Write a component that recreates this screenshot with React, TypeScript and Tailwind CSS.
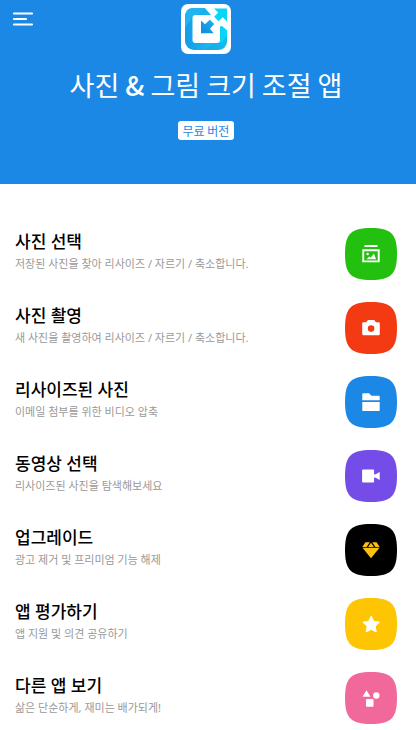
import type { ReactNode } from "react";

type MenuItem = {
  title: string;
  text: string;
  color: string;
  icon: ReactNode;
};

const items: MenuItem[] = [
  {
    title: "사진 선택",
    text: "저장된 사진을 찾아 리사이즈 / 자르기 / 축소합니다.",
    color: "text-[#23c00f]",
    icon: (
      <>
        <path d="M19.5 17h13v2h-13z" />
        <path
          fillRule="evenodd"
          d="M17.3 21.3h17.4v13H17.3zM19.2 23.2v9.2h13.6v-9.2z"
        />
        <circle cx="22.6" cy="26" r="1.2" />
        <path d="M21.6 31.2l2.6-2.6 1.5 1.2 3.2-4.2 2.2 5.6z" />
      </>
    ),
  },
  {
    title: "사진 촬영",
    text: "새 사진을 촬영하여 리사이즈 / 자르기 / 축소합니다.",
    color: "text-[#f33a12]",
    icon: (
      <path
        fillRule="evenodd"
        d="M23 18h6.2l1.8 2.3h2.5q1.3 0 1.3 1.3v10.1q0 1.5-1.3 1.5h-15q-1.3 0-1.3-1.5V21.6q0-1.3 1.3-1.3h2.7zM26.1 23.3a3.3 3.3 0 1 0 0 6.6 3.3 3.3 0 0 0 0-6.6z"
      />
    ),
  },
  {
    title: "리사이즈된 사진",
    text: "이메일 첨부를 위한 비디오 압축",
    color: "text-[#1c88e5]",
    icon: (
      <>
        <path d="M17.3 18.2q0-.9.9-.9H24l2.5 2.5h7.3q.9 0 .9.9v3.5H17.3z" />
        <path d="M17.3 26h17.4v8.2q0 .9-.9.9H18.2q-.9 0-.9-.9z" />
      </>
    ),
  },
  {
    title: "동영상 선택",
    text: "리사이즈된 사진을 탐색해보세요",
    color: "text-[#744de8]",
    icon: (
      <path d="M18 19.4h10.2q.9 0 .9.9v4.1l1.6-.1 4-2.4v8.2l-4-2.4-1.6-.1v3.9q0 .9-.9.9H18q-.9 0-.9-.9V20.3q0-.9.9-.9z" />
    ),
  },
  {
    title: "업그레이드",
    text: "광고 제거 및 프리미엄 기능 해제",
    color: "text-black",
    icon: (
      <g fill="#fcc010">
        <path d="M20.4 18.2h4.4l-3.2 4.8h-4.3zM26 18.8l2.9 4.2h-5.8zM27.2 18.2h4.4l3.1 4.8h-4.3z" />
        <path d="M17.5 23.8h17L26 34.3z" />
      </g>
    ),
  },
  {
    title: "앱 평가하기",
    text: "앱 지원 및 의견 공유하기",
    color: "text-[#fec502]",
    icon: (
      <path
        stroke="#fff"
        strokeWidth="1.4"
        strokeLinejoin="round"
        d="M26.2 18.6l2.4 5 5.4.7-4 3.8 1 5.5-4.8-2.7-4.8 2.7 1-5.5-4-3.8 5.4-.7z"
      />
    ),
  },
  {
    title: "다른 앱 보기",
    text: "삶은 단순하게, 재미는 배가되게!",
    color: "text-[#f0699a]",
    icon: (
      <>
        <path d="M21.5 18.3l4 6.5h-8z" />
        <circle cx="31.3" cy="23.5" r="3.2" />
        <rect x="21" y="27" width="7.5" height="7.7" rx=".7" />
      </>
    ),
  },
];

const Logo = () => {
  return (
    <svg viewBox="0 0 50 50" className="size-[50px]" aria-hidden="true">
      <defs>
        <linearGradient id="frame" x1="0" y1="0" x2="1" y2="0">
          <stop offset="0" stopColor="#149be8" />
          <stop offset="0.6" stopColor="#18b9ef" />
          <stop offset="1" stopColor="#07dcfb" />
        </linearGradient>
        <linearGradient id="arrow" x1="0" y1="1" x2="1" y2="0">
          <stop offset="0" stopColor="#1487dc" />
          <stop offset="1" stopColor="#16b4ee" />
        </linearGradient>
      </defs>
      <rect width="50" height="50" rx="7" fill="#fff" />
      <rect x="4" y="4" width="42" height="42" rx="9" fill="url(#frame)" />
      {/* Folds of the ribbon */}
      <path d="M12 4h12L11 18v-4L4 24V13q0-9 8-9z" fill="#22b4f0" />
      <path d="M24 46l9-7h8l5-8v6q0 9-9 9z" fill="#169ee5" opacity="0.5" />
      <rect x="11.5" y="11" width="27.5" height="28" rx="3" fill="#fff" />
      <path d="M23 3h24v24l-6-5-8 2-6-8 3-5z" fill="#fff" />
      {/* Arrows */}
      <path d="M20 16.5l4 3.8 4.8-4.6 4.4 4.4-4.2 4.6 3.7 4.6H20z" fill="url(#arrow)" />
      <path d="M33 4.5h13v13l-4.3-4.3-4.2 4-4.3-4.4 4-4.2z" fill="#08d5f8" />
    </svg>
  );
};

const App = () => {
  return (
    <div className="min-h-screen bg-white font-['Noto_Sans_CJK_KR',sans-serif]">
      {/* Header */}
      <header className="grid grid-cols-[1fr_auto_1fr] bg-[#1c88e5] pt-1 pr-1 pb-11 text-white">
        <button aria-label="메뉴" className="ml-3 mt-2 size-6 self-start">
          <svg viewBox="0 0 24 24" className="size-6" aria-hidden="true">
            <path
              d="M2 1.5h18M2 7h12M2 12.5h18"
              stroke="currentColor"
              strokeWidth="2.2"
              strokeLinecap="round"
            />
          </svg>
        </button>
        <Logo />
        <div className="col-span-3 flex flex-col items-center">
          <h1 className="mt-3 text-[27px] leading-[38px]">
            사진 <span className="font-medium">&amp;</span> 그림 크기 조절 앱
          </h1>
          <span className="mt-[17px] rounded-[3px] bg-white px-[5px] text-xs leading-[19px] text-[#1c88e5]">
            무료 버전
          </span>
        </div>
      </header>

      {/* Menu */}
      <ul className="flex flex-col gap-[22px] pt-11 pr-[19px] pb-1 pl-[15px] font-['Noto_Sans','Noto_Sans_CJK_KR',sans-serif]">
        {items.map((item) => (
          <li key={item.title}>
            <button className="flex w-full items-center justify-between text-left">
              <span className="flex flex-col pb-1">
                <span className="text-[17px] leading-6 font-medium text-black">
                  {item.title}
                </span>
                <span className="text-[11px] leading-5 text-[#999999]">
                  {item.text}
                </span>
              </span>
              <svg
                viewBox="0 0 52 52"
                className={`size-[52px] shrink-0 ${item.color}`}
                fill="#fff"
                aria-hidden="true"
              >
                <path
                  fill="currentColor"
                  d="M26 0C46 0 52 6 52 26S46 52 26 52 0 46 0 26 6 0 26 0z"
                />
                {item.icon}
              </svg>
            </button>
          </li>
        ))}
      </ul>
    </div>
  );
};

export default App;
